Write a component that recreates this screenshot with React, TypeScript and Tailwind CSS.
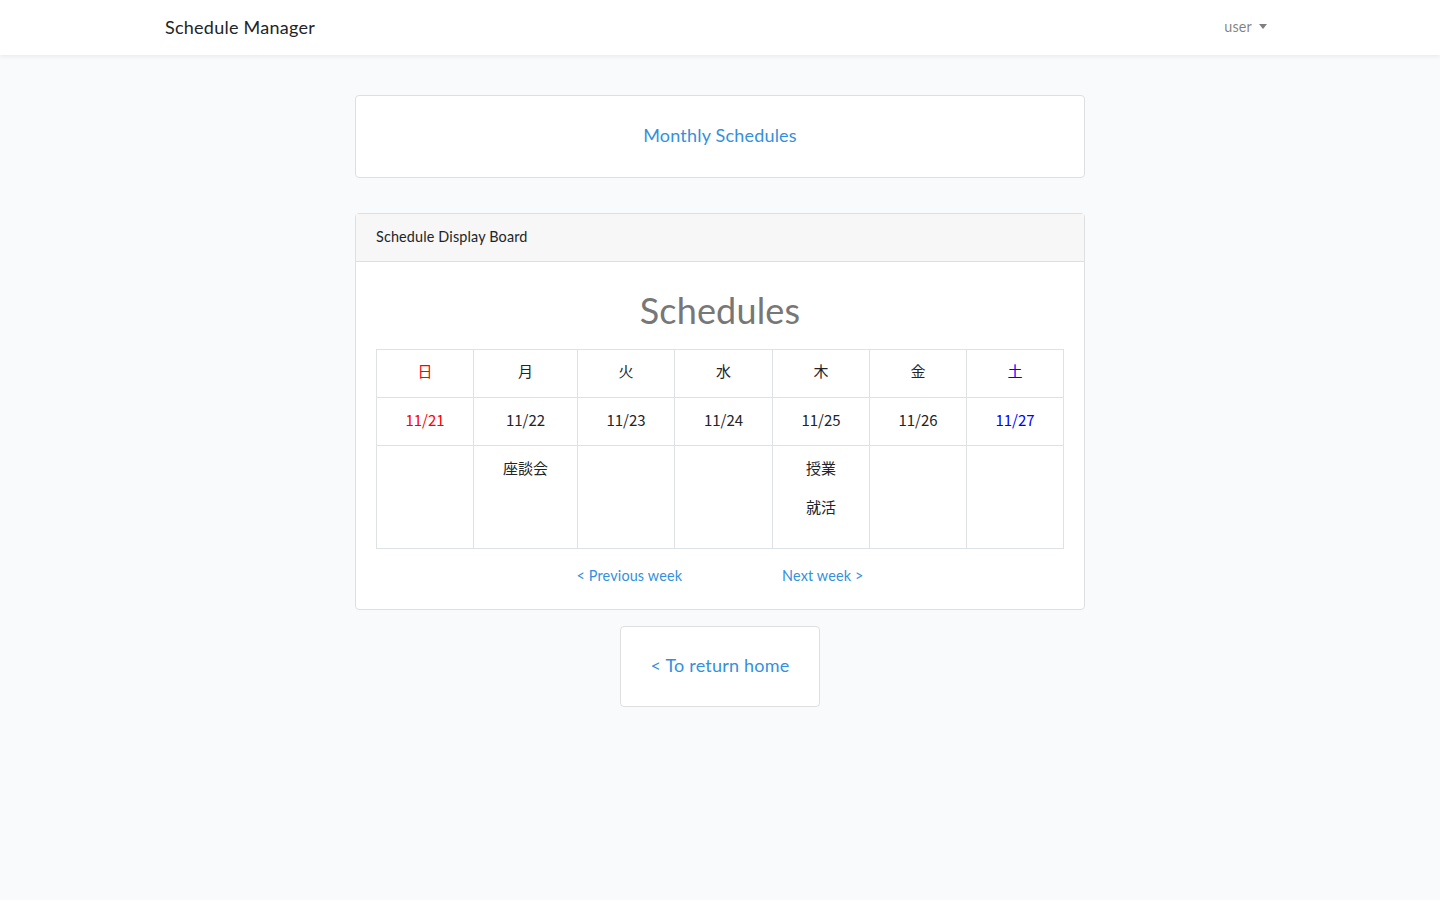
const days = [
  { label: '日', date: '11/21', color: 'text-[#ff0000]', w: 'w-[97px]' },
  { label: '月', date: '11/22', color: 'text-[#212529]', w: 'w-[104px]' },
  { label: '火', date: '11/23', color: 'text-[#212529]', w: 'w-[97px]' },
  { label: '水', date: '11/24', color: 'text-[#212529]', w: 'w-[98px]' },
  { label: '木', date: '11/25', color: 'text-[#212529]', w: 'w-[97px]' },
  { label: '金', date: '11/26', color: 'text-[#212529]', w: 'w-[97px]' },
  { label: '土', date: '11/27', color: 'text-[#0000ff]', w: 'w-[97px]' },
];

const events: string[][] = [[], ['座談会'], [], [], ['授業', '就活'], [], []];

export default function App() {
  return (
    <div className="min-h-[900px] bg-[#f8fafc] text-[#212529] font-['Lato','Noto_Sans',sans-serif] text-[14.4px] leading-[1.6] tracking-[0.15px]">
      {/* Navbar */}
      <nav className="h-[55px] bg-white shadow-[0_2px_4px_rgba(0,0,0,0.06)]">
        <div className="mx-auto flex h-full w-[1140px] items-center justify-between px-[15px]">
          <span className="text-[18px] tracking-[0.25px] text-[#212529]">Schedule Manager</span>
          <button className="mr-[8px] flex items-center gap-[7px] pb-[2px] text-[rgba(0,0,0,0.5)]">
            user
            <span className="h-0 w-0 border-x-[4.5px] border-t-[5px] border-x-transparent border-t-[rgba(0,0,0,0.5)]" />
          </button>
        </div>
      </nav>

      <main className="mx-auto flex w-[730px] flex-col items-center pt-[40px]">
        <div className="flex h-[83px] w-full items-center justify-center rounded-[4px] border border-[#dfdfdf] bg-white pb-[3px]">
          <a className="text-[18px] tracking-[0.2px] text-[#3490dc]">Monthly Schedules</a>
        </div>

        <div className="mt-[35px] w-full rounded-[4px] border border-[#dfdfdf] bg-white">
          <div className="h-[48px] border-b border-[#dfdfdf] bg-[#f7f7f7] px-[20px] pt-[11px] leading-[24px]">
            Schedule Display Board
          </div>
          <div className="px-[20px] pt-[20px] pb-[20px]">
            <h1 className="mt-[7px] mb-[17px] text-center text-[36px] leading-[43px] text-[#777777]">Schedules</h1>
            <table className="w-[688px] table-fixed border-collapse font-['Noto_Sans_CJK_JP',sans-serif] text-[15px] leading-[23px] tracking-normal">
              <thead>
                <tr>
                  {days.map((d) => (
                    <th key={d.label} className={`${d.w} ${d.color} h-[48px] border border-[#dee2e6] px-[12px] py-0 pb-[6px] text-center font-normal`}>
                      {d.label}
                    </th>
                  ))}
                </tr>
              </thead>
              <tbody>
                <tr>
                  {days.map((d) => (
                    <td key={d.date} className={`${d.color} h-[48px] border border-[#dee2e6] px-[12px] py-0 pb-[4px] text-center`}>
                      {d.date}
                    </td>
                  ))}
                </tr>
                <tr>
                  {events.map((list, i) => (
                    <td key={i} className="h-[103px] border border-[#dee2e6] px-[12px] pt-[10px] pb-0 text-center align-top">
                      {list.map((e) => (
                        <p key={e} className="mb-[16px] text-[#212529]">
                          {e}
                        </p>
                      ))}
                    </td>
                  ))}
                </tr>
              </tbody>
            </table>
            <div className="mt-[15px] flex justify-center gap-[100px] pb-[2px]">
              <a className="text-[#3490dc]">&lt; Previous week</a>
              <a className="text-[#3490dc]">Next week &gt;</a>
            </div>
          </div>
        </div>

        <a className="mt-[16px] flex h-[81px] w-[200px] items-center justify-center rounded-[4px] border border-[#dfdfdf] bg-white pb-[3px] text-[18px] tracking-[0.2px] text-[#3490dc]">
          &lt; To return home
        </a>
      </main>
    </div>
  );
}
